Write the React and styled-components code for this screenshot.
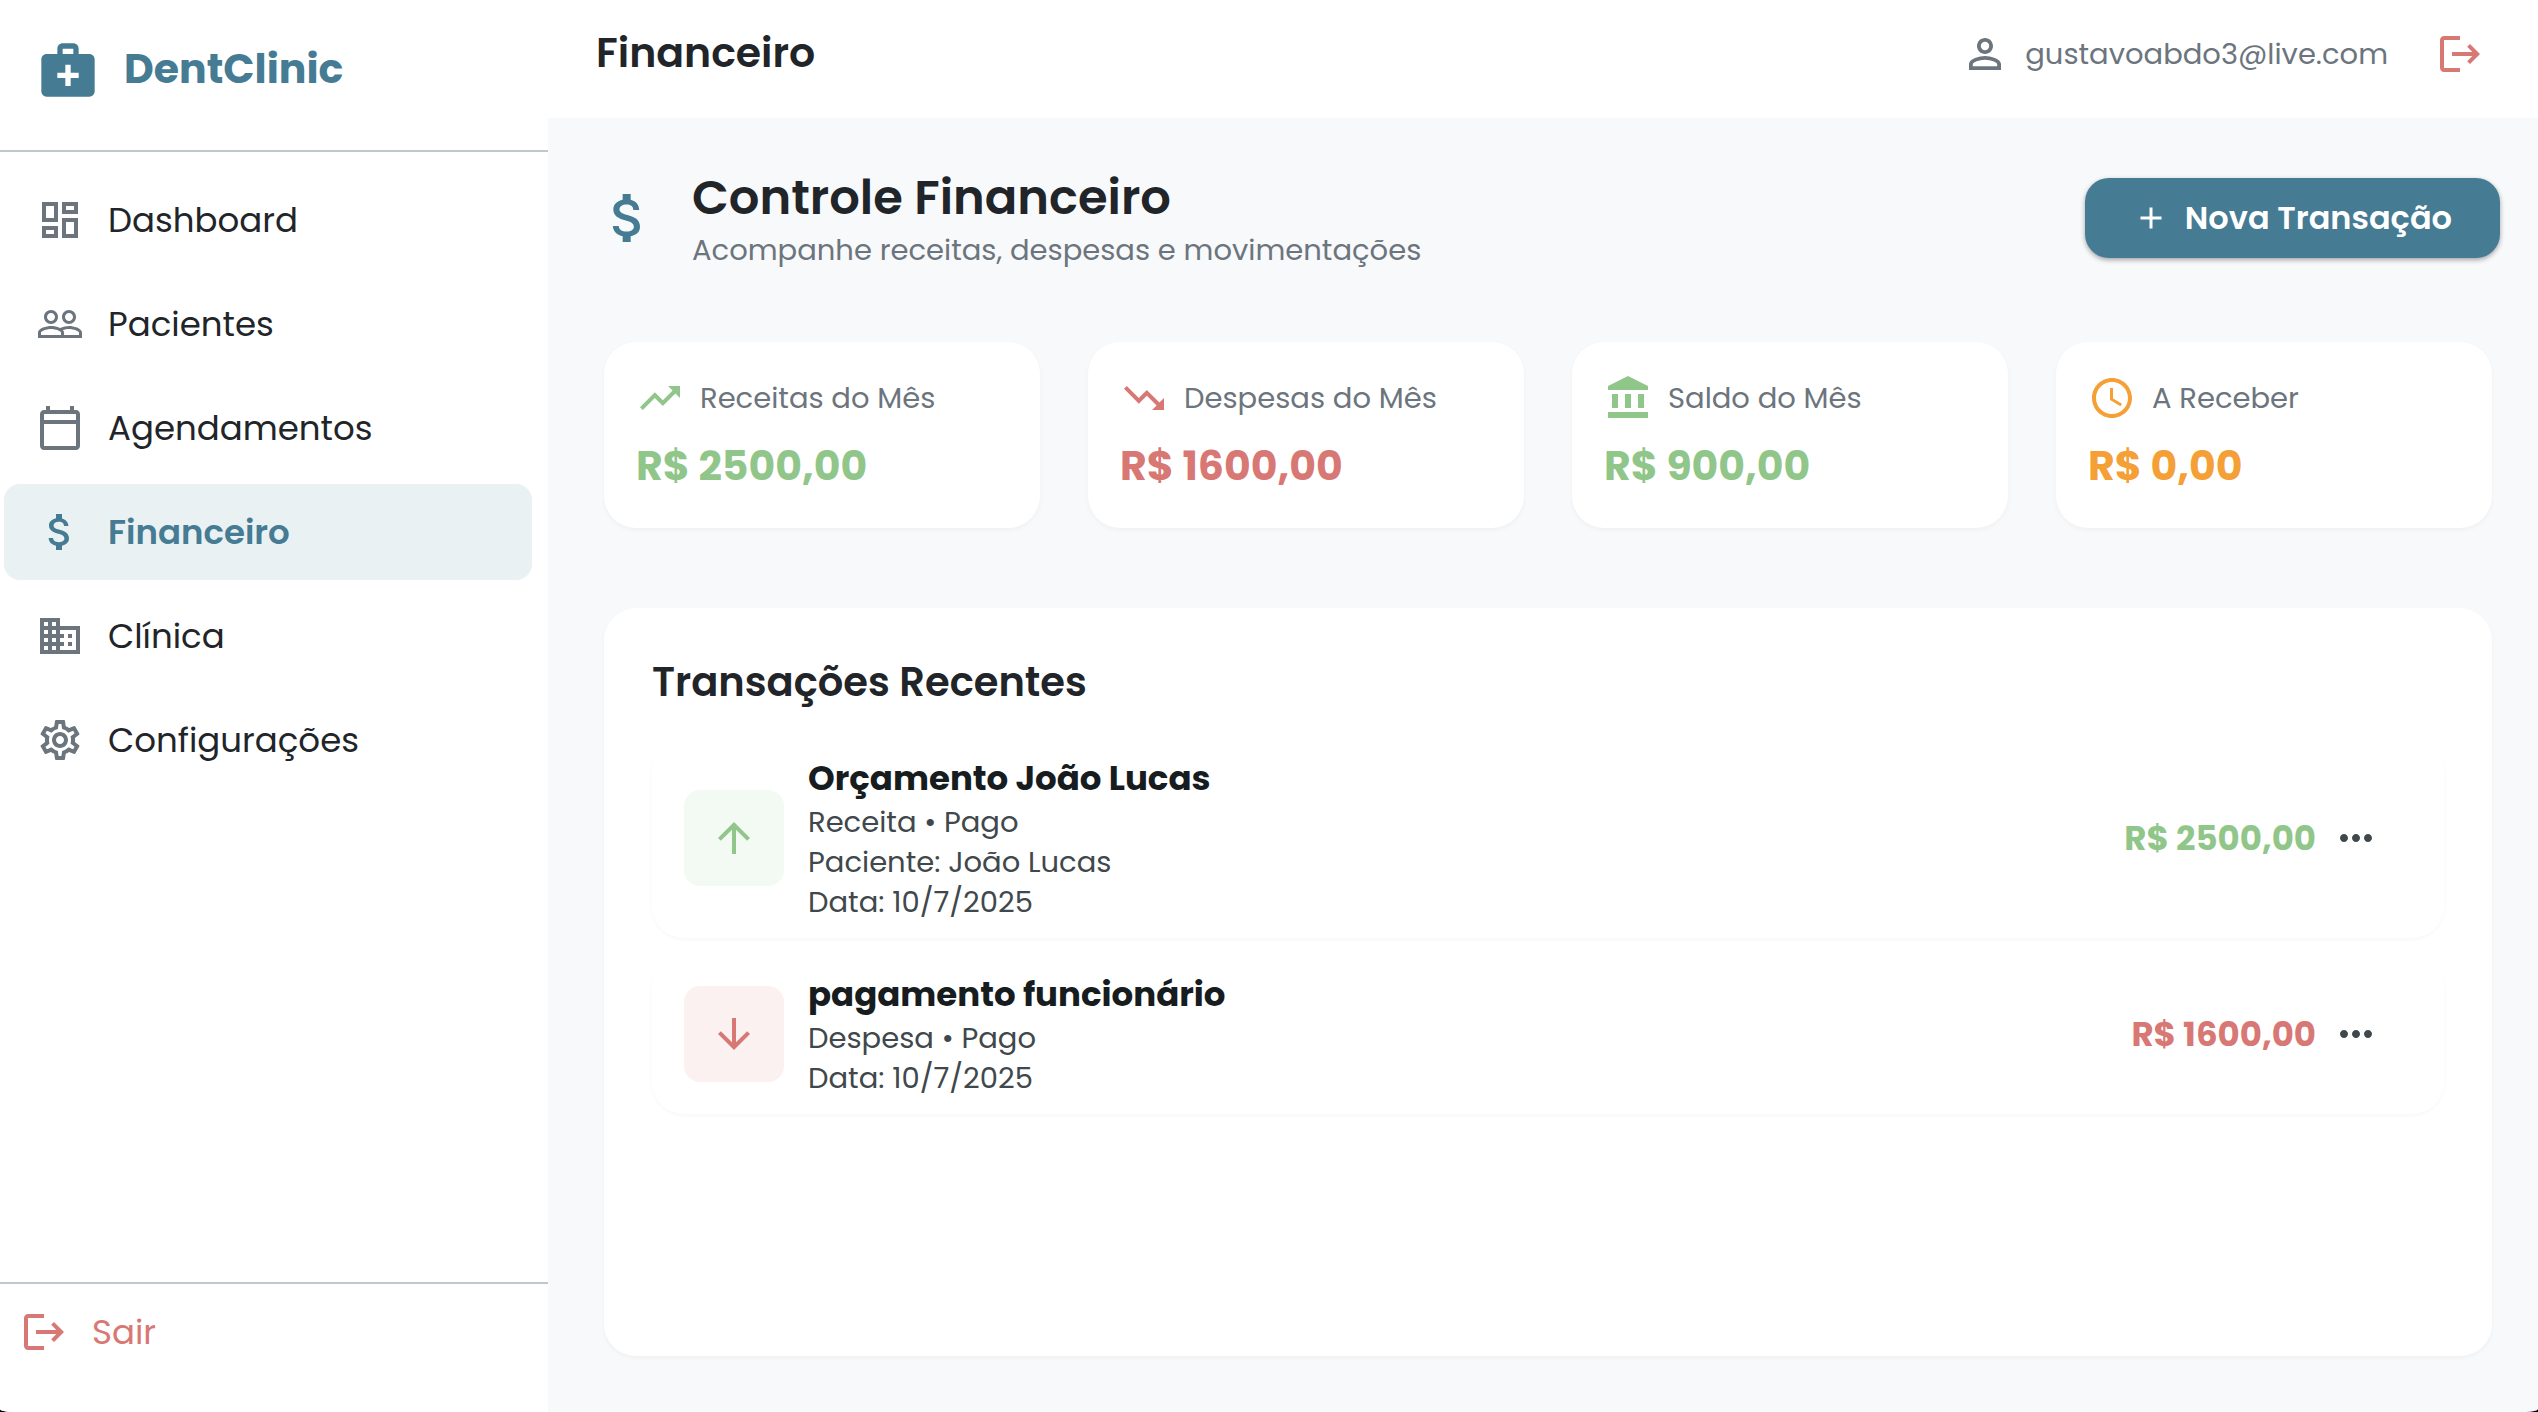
import React from "react";
import styled, { createGlobalStyle } from "styled-components";
import {
  MdAccountBalance,
  MdAccessTime,
  MdAdd,
  MdArrowDownward,
  MdArrowUpward,
  MdAttachMoney,
  MdBusiness,
  MdLogout,
  MdMedicalServices,
  MdMoreHoriz,
  MdOutlineCalendarToday,
  MdOutlineDashboard,
  MdOutlineSettings,
  MdPeopleOutline,
  MdPersonOutline,
  MdTrendingDown,
  MdTrendingUp,
} from "react-icons/md";

const color = {
  primary: "#457b93",
  active: "#e9f1f3",
  ink: "#212529",
  muted: "#6c757d",
  strong: "#171c1f",
  detail: "#40484c",
  line: "#c0c8cc",
  page: "#f8f9fb",
  surface: "#ffffff",
  income: "#91c68a",
  incomeSoft: "#f3f9f3",
  expense: "#d87875",
  expenseSoft: "#faf1f0",
  pending: "#f4a037",
};

const GlobalStyle = createGlobalStyle`
  *, *::before, *::after { box-sizing: border-box; }
  body {
    margin: 0;
    background: #000;
    font-family: Poppins, Inter, "Noto Sans", sans-serif;
    color: ${color.ink};
  }
  h1, h2, h3, p, ul { margin: 0; padding: 0; }
  ul { list-style: none; }
  a { color: inherit; text-decoration: none; }
  button { font: inherit; border: 0; background: none; cursor: pointer; }
  svg { display: block; flex: none; }
`;

const Shell = styled.div`
  display: grid;
  grid-template-columns: 548px minmax(0, 1fr);
  min-height: 100vh;
  overflow: hidden;
  background: ${color.page};
  border-radius: 0 0 12px 12px / 0 0 3px 3px;
`;

const Sidebar = styled.aside`
  display: flex;
  flex-direction: column;
  background: ${color.surface};
`;

const Brand = styled.div`
  display: flex;
  align-items: flex-start;
  gap: 24px;
  padding: 38px 36px 48px;
  border-bottom: 2px solid ${color.line};
  color: ${color.primary};
  font-size: 41px;
  line-height: 62px;
  font-weight: 700;
`;

const Nav = styled.nav`
  flex: 1;
  padding: 20px 16px 20px 4px;
`;

const NavList = styled.ul`
  display: flex;
  flex-direction: column;
  gap: 8px;
`;

const NavLink = styled.a`
  display: flex;
  align-items: center;
  gap: 24px;
  height: 96px;
  padding: 0 32px;
  border-radius: 16px;
  font-size: 34px;
  font-weight: ${(p) => (p.$active ? 600 : 400)};
  color: ${(p) => (p.$active ? color.primary : color.ink)};
  background: ${(p) => (p.$active ? color.active : "transparent")};

  svg {
    color: ${(p) => (p.$active ? color.primary : color.muted)};
  }
`;

const SidebarFooter = styled.div`
  padding-bottom: 32px;
  border-top: 2px solid ${color.line};
`;

const SignOut = styled.button`
  display: flex;
  align-items: center;
  gap: 24px;
  width: 100%;
  height: 96px;
  padding: 0 20px;
  color: ${color.expense};
  font-size: 34px;
`;

const Content = styled.div`
  display: flex;
  flex-direction: column;
  min-width: 0;
`;

const TopBar = styled.header`
  display: flex;
  align-items: flex-start;
  justify-content: space-between;
  padding: 22px 30px 32px 48px;
  background: ${color.surface};
`;

const TopTitle = styled.h1`
  font-size: 41px;
  line-height: 62px;
  font-weight: 600;
`;

const Account = styled.div`
  display: flex;
  align-items: center;
  gap: 24px;
`;

const User = styled.div`
  display: flex;
  align-items: center;
  gap: 16px;
  color: ${color.muted};
  font-size: 29px;
`;

const IconButton = styled.button`
  display: flex;
  padding: 8px ${(p) => p.$padX}px;
  color: ${(p) => p.$tone};
`;

const Main = styled.main`
  flex: 1;
  display: flex;
  flex-direction: column;
  padding: 48px 38px 56px 48px;
`;

const PageHead = styled.div`
  display: flex;
  align-items: center;
  gap: 32px;
  margin-bottom: 72px;
  color: ${color.primary};
`;

const PageText = styled.div`
  flex: 1;
`;

const PageTitle = styled.h2`
  color: ${color.ink};
  font-size: 48px;
  line-height: 64px;
  font-weight: 600;
`;

const PageHint = styled.p`
  color: ${color.muted};
  font-size: 29px;
  line-height: 40px;
`;

const PrimaryButton = styled.button`
  display: flex;
  align-items: center;
  gap: 16px;
  height: 80px;
  padding: 0 48px;
  border-radius: 24px;
  background: ${color.primary};
  color: #fff;
  font-size: 32px;
  font-weight: 600;
  box-shadow: 0 2px 5px rgba(0, 0, 0, 0.35);
`;

const Summary = styled.section`
  display: grid;
  grid-template-columns: repeat(4, minmax(0, 1fr));
  gap: 48px;
  margin: 0 8px 80px;
`;

const Card = styled.article`
  padding: 32px;
  border-radius: 32px;
  background: ${color.surface};
  color: ${(p) => p.$tone};
  box-shadow: 0 2px 5px rgba(0, 0, 0, 0.04);
`;

const CardHead = styled.div`
  display: flex;
  align-items: center;
  gap: 16px;
  margin-bottom: 14px;
`;

const CardLabel = styled.h3`
  color: ${color.muted};
  font-size: 29px;
  line-height: 48px;
  font-weight: 400;
`;

const CardValue = styled.p`
  font-size: 41px;
  line-height: 60px;
  font-weight: 700;
`;

const Panel = styled.section`
  flex: 1;
  margin: 0 8px;
  padding: 48px;
  border-radius: 32px;
  background: ${color.surface};
  box-shadow: 0 2px 5px rgba(0, 0, 0, 0.04);
`;

const PanelTitle = styled.h2`
  margin-bottom: 30px;
  font-size: 40px;
  line-height: 52px;
  font-weight: 600;
`;

const Transactions = styled.ul`
  display: flex;
  flex-direction: column;
  gap: 16px;
`;

const Row = styled.li`
  display: flex;
  align-items: center;
  gap: 24px;
  padding: 16px 48px 16px 32px;
  border-radius: 32px;
  box-shadow: 0 2px 4px rgba(0, 0, 0, 0.03);
`;

const Tile = styled.div`
  display: grid;
  place-items: center;
  width: 100px;
  height: 96px;
  border-radius: 16px;
  color: ${(p) => (p.$income ? color.income : color.expense)};
  background: ${(p) => (p.$income ? color.incomeSoft : color.expenseSoft)};
`;

const RowText = styled.div`
  flex: 1;
  color: ${color.detail};
  font-size: 29px;
  line-height: 40px;
`;

const RowName = styled.h3`
  color: ${color.strong};
  font-size: 34px;
  line-height: 48px;
  font-weight: 700;
`;

const RowEnd = styled.div`
  display: flex;
  align-items: center;
`;

const Amount = styled.span`
  color: ${(p) => (p.$income ? color.income : color.expense)};
  font-size: 34px;
  font-weight: 700;
`;

const navItems = [
  { label: "Dashboard", Icon: MdOutlineDashboard },
  { label: "Pacientes", Icon: MdPeopleOutline },
  { label: "Agendamentos", Icon: MdOutlineCalendarToday },
  { label: "Financeiro", Icon: MdAttachMoney, active: true },
  { label: "Clínica", Icon: MdBusiness },
  { label: "Configurações", Icon: MdOutlineSettings },
];

const cards = [
  { label: "Receitas do Mês", value: "R$ 2500,00", Icon: MdTrendingUp, tone: color.income },
  { label: "Despesas do Mês", value: "R$ 1600,00", Icon: MdTrendingDown, tone: color.expense },
  { label: "Saldo do Mês", value: "R$ 900,00", Icon: MdAccountBalance, tone: color.income },
  { label: "A Receber", value: "R$ 0,00", Icon: MdAccessTime, tone: color.pending },
];

const transactions = [
  {
    name: "Orçamento João Lucas",
    lines: ["Receita • Pago", "Paciente: João Lucas", "Data: 10/7/2025"],
    amount: "R$ 2500,00",
    income: true,
  },
  {
    name: "pagamento funcionário",
    lines: ["Despesa • Pago", "Data: 10/7/2025"],
    amount: "R$ 1600,00",
    income: false,
  },
];

export default function App() {
  return (
    <>
      <GlobalStyle />
      <Shell>
        <Sidebar>
          <Brand>
            <MdMedicalServices size={64} />
            DentClinic
          </Brand>
          <Nav>
            <NavList>
              {navItems.map(({ label, Icon, active }) => (
                <li key={label}>
                  <NavLink href="#" $active={active} aria-current={active ? "page" : undefined}>
                    <Icon size={48} />
                    {label}
                  </NavLink>
                </li>
              ))}
            </NavList>
          </Nav>
          <SidebarFooter>
            <SignOut type="button">
              <MdLogout size={48} />
              Sair
            </SignOut>
          </SidebarFooter>
        </Sidebar>

        <Content>
          <TopBar>
            <TopTitle>Financeiro</TopTitle>
            <Account>
              <User>
                <MdPersonOutline size={48} />
                gustavoabdo3@live.com
              </User>
              <IconButton type="button" $padX={24} $tone={color.expense} aria-label="Sair">
                <MdLogout size={48} />
              </IconButton>
            </Account>
          </TopBar>

          <Main>
            <PageHead>
              <MdAttachMoney size={64} />
              <PageText>
                <PageTitle>Controle Financeiro</PageTitle>
                <PageHint>Acompanhe receitas, despesas e movimentações</PageHint>
              </PageText>
              <PrimaryButton type="button">
                <MdAdd size={36} />
                Nova Transação
              </PrimaryButton>
            </PageHead>

            <Summary>
              {cards.map(({ label, value, Icon, tone }) => (
                <Card key={label} $tone={tone}>
                  <CardHead>
                    <Icon size={48} />
                    <CardLabel>{label}</CardLabel>
                  </CardHead>
                  <CardValue>{value}</CardValue>
                </Card>
              ))}
            </Summary>

            <Panel>
              <PanelTitle>Transações Recentes</PanelTitle>
              <Transactions>
                {transactions.map(({ name, lines, amount, income }) => (
                  <Row key={name}>
                    <Tile $income={income}>
                      {income ? <MdArrowUpward size={48} /> : <MdArrowDownward size={48} />}
                    </Tile>
                    <RowText>
                      <RowName>{name}</RowName>
                      {lines.map((line) => (
                        <p key={line}>{line}</p>
                      ))}
                    </RowText>
                    <RowEnd>
                      <Amount $income={income}>{amount}</Amount>
                      <IconButton type="button" $padX={16} $tone={color.detail} aria-label="Mais opções">
                        <MdMoreHoriz size={48} />
                      </IconButton>
                    </RowEnd>
                  </Row>
                ))}
              </Transactions>
            </Panel>
          </Main>
        </Content>
      </Shell>
    </>
  );
}
